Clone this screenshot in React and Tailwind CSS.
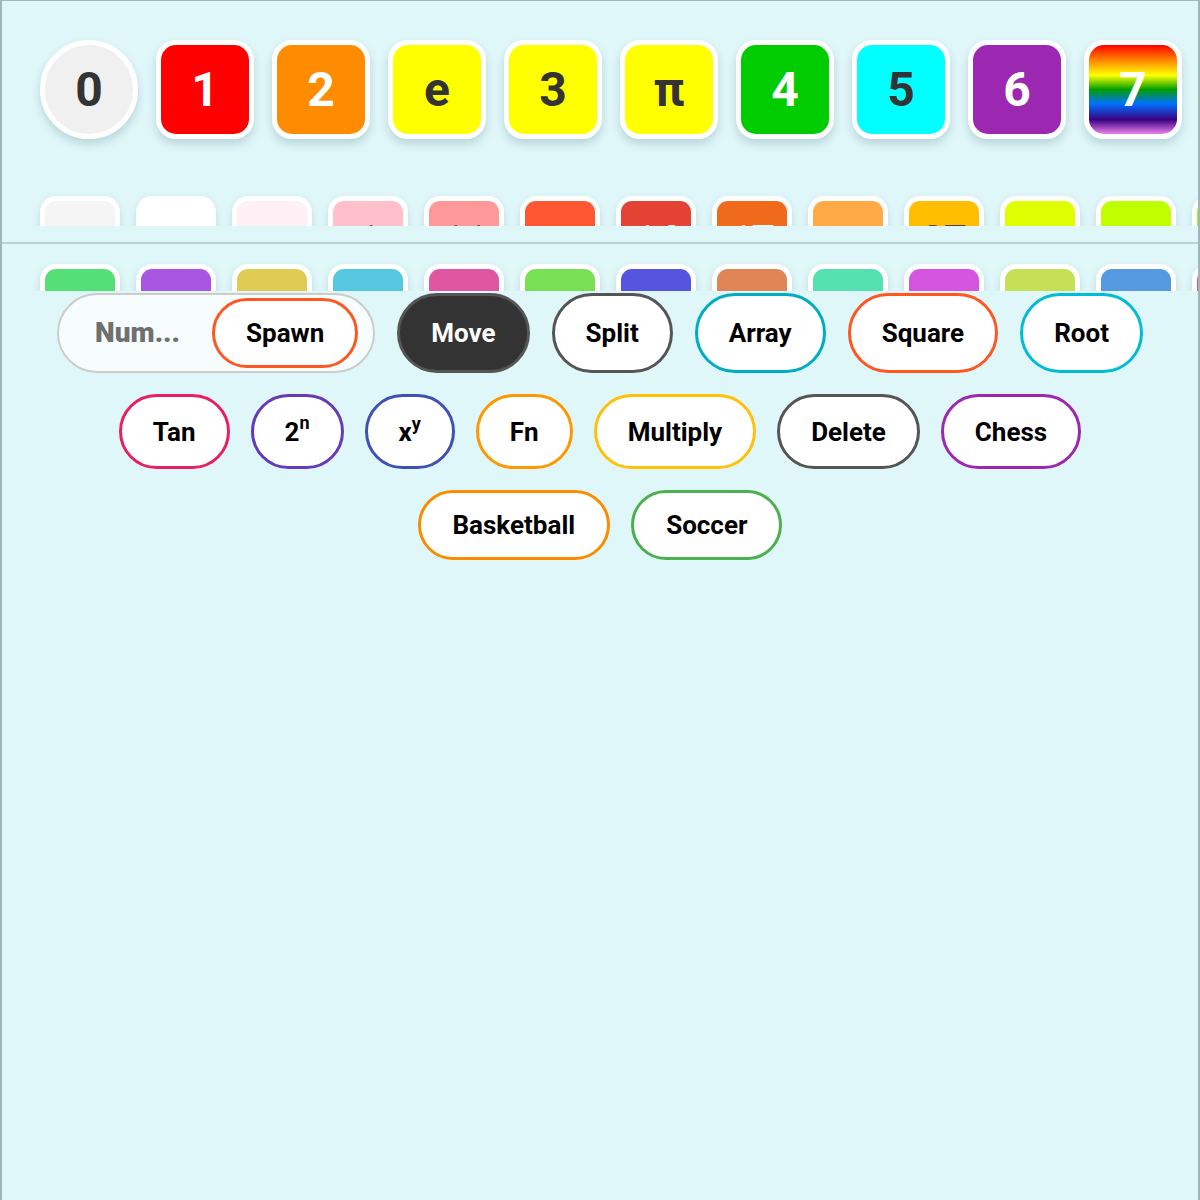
import React from "react";

const TOP = [
  { label: "0", bg: "bg-[#f0f0f0]", text: "text-[#333]", round: true },
  { label: "1", bg: "bg-[#ff0000]", text: "text-white" },
  { label: "2", bg: "bg-[#ff8c00]", text: "text-white" },
  { label: "e", bg: "bg-[#ffff00]", text: "text-[#333]" },
  { label: "3", bg: "bg-[#ffff00]", text: "text-[#333]" },
  { label: "π", bg: "bg-[#ffff00]", text: "text-[#333]" },
  { label: "4", bg: "bg-[#00cc00]", text: "text-white" },
  { label: "5", bg: "bg-[#00ffff]", text: "text-[#333]" },
  { label: "6", bg: "bg-[#9c27b0]", text: "text-white" },
  { label: "7", bg: "bg-[linear-gradient(to_bottom,#ff0000_0%,#ff8c00_18%,#ffff00_34%,#00a000_50%,#0070ff_66%,#3a0080_84%,#ee82ee_100%)]", text: "text-white" },
];

const STRIP_ONE = [
  { bg: "bg-[#f5f5f5]", label: "" },
  { bg: "bg-[#ffffff]", label: "" },
  { bg: "bg-[#fff0f5]", label: "" },
  { bg: "bg-[#ffc0cb]", label: "1", text: "text-[#444]" },
  { bg: "bg-[#ff9999]", label: "11", text: "text-[#444]" },
  { bg: "bg-[#ff5733]", label: "" },
  { bg: "bg-[#e34234]", label: "14", text: "text-white" },
  { bg: "bg-[#f06a1c]", label: "17", text: "text-white" },
  { bg: "bg-[#ffaa44]", label: "" },
  { bg: "bg-[#ffbf00]", label: "27", text: "text-[#444]" },
  { bg: "bg-[#dfff00]", label: "" },
  { bg: "bg-[#bfff00]", label: "" },
  { bg: "bg-[#9fff00]", label: "" },
];

const STRIP_TWO = [
  "bg-[#55e077]",
  "bg-[#a855e0]",
  "bg-[#e0cc55]",
  "bg-[#55c8e0]",
  "bg-[#e055a0]",
  "bg-[#77e055]",
  "bg-[#5555e0]",
  "bg-[#e08555]",
  "bg-[#55e0b0]",
  "bg-[#d555e0]",
  "bg-[#c5e055]",
  "bg-[#5599e0]",
  "bg-[#e05577]",
];

function Pill({ border, dark, wide, children }) {
  return (
    <button
      className={`flex shrink-0 items-center justify-center rounded-full border-[3px] text-[26px] font-bold leading-none ${
        wide ? "px-[32px]" : "px-[31px]"
      } ${border} ${dark ? "bg-[#333] text-white" : "bg-white text-black"}`}
    >
      {children}
    </button>
  );
}

export default function App() {
  return (
    <div
      className="min-h-[1200px] w-full overflow-hidden border-x-2 border-t border-[#9fb6bb] bg-[#e0f7fa] pt-[39px]"
      style={{ fontFamily: "Roboto, 'Liberation Sans', sans-serif" }}
    >
      {/* number tiles */}
      <div className="flex gap-[18px] pl-[38px]">
        {TOP.map((t) => (
          <div
            key={t.label}
            className={`flex h-[99px] w-[98px] shrink-0 items-center justify-center border-[5px] border-white shadow-[0_5px_10px_rgba(0,60,70,0.18)] ${
              t.round ? "rounded-full" : "rounded-[20px]"
            } ${t.bg}`}
          >
            <span className={`text-[48px] font-bold leading-none ${t.text}`}>{t.label}</span>
          </div>
        ))}
      </div>

      {/* first palette strip, clipped */}
      <div className="h-[87px] overflow-hidden pt-[57px]">
        <div className="flex gap-[16px] pl-[38px]">
          {STRIP_ONE.map((t, i) => (
            <div
              key={i}
              className={`flex h-[80px] w-[80px] shrink-0 items-start justify-center rounded-[16px] border-[5px] border-white pt-[20px] shadow-[0_4px_8px_rgba(0,60,70,0.15)] ${t.bg}`}
            >
              <span className={`text-[40px] font-bold leading-none ${t.text || ""}`}>{t.label}</span>
            </div>
          ))}
        </div>
      </div>

      <div className="h-[16px]" />
      <div className="h-[2px] bg-[#b8d3d8]" />

      {/* second palette strip, clipped */}
      <div className="h-[47px] overflow-hidden pt-[20px]">
        <div className="flex gap-[16px] pl-[38px]">
          {STRIP_TWO.map((bg, i) => (
            <div
              key={i}
              className={`h-[80px] w-[80px] shrink-0 rounded-[16px] border-[5px] border-white shadow-[0_4px_8px_rgba(0,60,70,0.15)] ${bg}`}
            />
          ))}
        </div>
      </div>

      {/* tool buttons */}
      <div className="mt-[2px] flex flex-col gap-[21px]">
        <div className="flex h-[80px] justify-center gap-[22px]">
          <div className="flex shrink-0 items-center rounded-full border-2 border-[#cccccc] bg-[#f7fcfd] pl-[36px] pr-[15px]">
            <span className="w-[117px] text-[28px] font-black leading-none text-[#707070]">Num...</span>
            <button className="flex h-[70px] items-center justify-center rounded-full border-[3px] border-[#ff5722] bg-white px-[31px] text-[26px] font-bold leading-none text-black">
              Spawn
            </button>
          </div>
          <Pill border="border-[#555]" dark>
            Move
          </Pill>
          <Pill border="border-[#555]">Split</Pill>
          <Pill border="border-[#00acc1]">Array</Pill>
          <Pill border="border-[#ff5722]">Square</Pill>
          <Pill border="border-[#00bcd4]">Root</Pill>
        </div>

        <div className="flex h-[75px] justify-center gap-[21px]">
          <Pill border="border-[#e91e63]">Tan</Pill>
          <Pill border="border-[#673ab7]">
            2<span className="relative -top-[9px] text-[18px]">n</span>
          </Pill>
          <Pill border="border-[#3f51b5]">
            x<span className="relative -top-[8px] text-[18px]">y</span>
          </Pill>
          <Pill border="border-[#ff9800]">Fn</Pill>
          <Pill border="border-[#ffc107]">Multiply</Pill>
          <Pill border="border-[#555]">Delete</Pill>
          <Pill border="border-[#9c27b0]">Chess</Pill>
        </div>

        <div className="flex h-[70px] justify-center gap-[21px]">
          <Pill border="border-[#fb8c00]" wide>
            Basketball
          </Pill>
          <Pill border="border-[#4caf50]" wide>
            Soccer
          </Pill>
        </div>
      </div>
    </div>
  );
}
